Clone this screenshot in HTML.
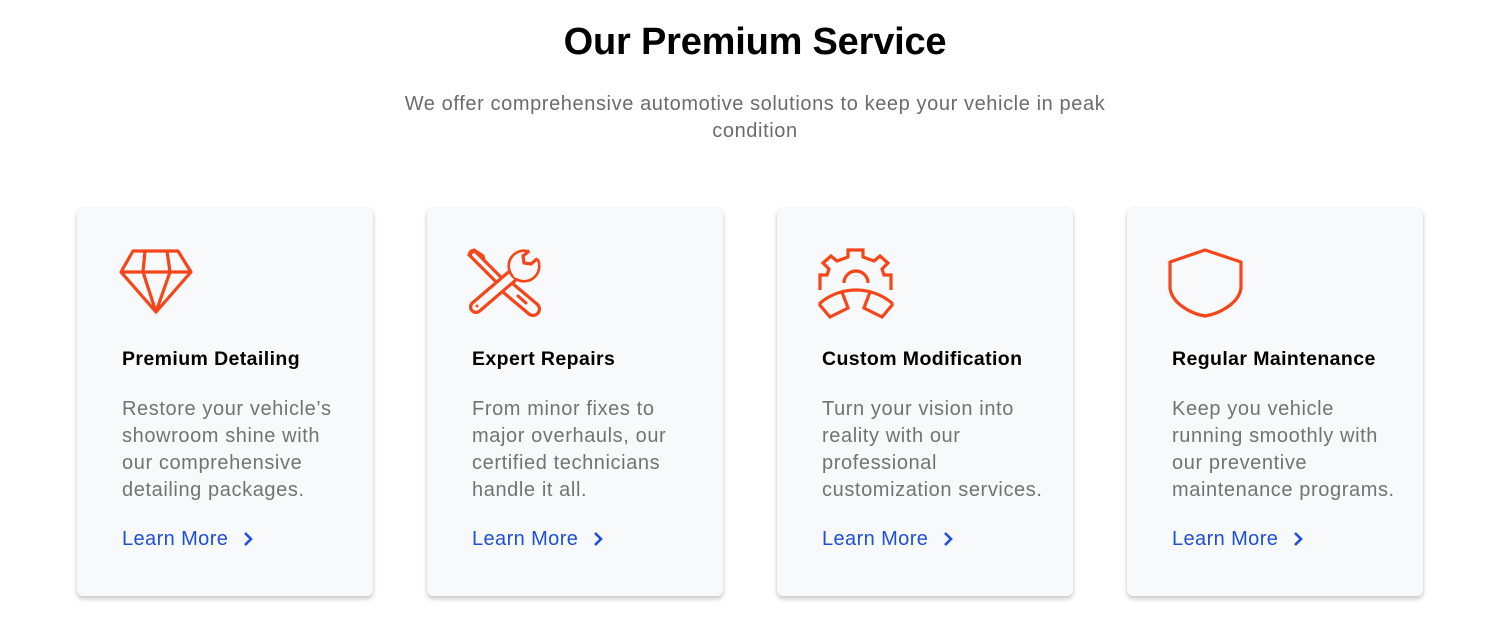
<!DOCTYPE html>
<html><head><meta charset="utf-8"><style>
*{margin:0;padding:0;box-sizing:border-box}
body{width:1510px;height:642px;background:#fff;font-family:"Liberation Sans",sans-serif;position:relative;overflow:hidden}
h1{position:absolute;top:21px;left:0;width:1510px;text-align:center;font-size:38px;font-weight:bold;color:#000;letter-spacing:-0.2px}
.sub{position:absolute;top:91px;left:0;width:1510px;text-align:center;font-size:20px;line-height:27px;color:#6b6b6b;letter-spacing:0.6px}
.card{position:absolute;top:208px;width:296px;height:388px;background:#f8f9fb;border-radius:6px;box-shadow:0 3px 5px rgba(0,0,0,.2),0 0 2px rgba(0,0,0,.08)}
.card svg.ic{position:absolute;left:41px;top:40px}
.card h3{position:absolute;left:45px;top:140px;font-size:19.5px;font-weight:bold;color:#000;white-space:nowrap;letter-spacing:0.4px}
.card p{position:absolute;left:45px;top:188px;font-size:20px;line-height:27px;color:#737373;white-space:nowrap;letter-spacing:0.6px}
.card a{position:absolute;left:45px;top:320px;font-size:20px;color:#1e4fd8;text-decoration:none;white-space:nowrap;letter-spacing:0.4px}
.card a svg{position:absolute;left:120px;top:3px}
</style></head><body>
<h1>Our Premium Service</h1>
<div class="sub">We offer comprehensive automotive solutions to keep your vehicle in peak<br>condition</div>

<div class="card" style="left:77px">
<svg class="ic" width="76" height="72" viewBox="0 0 76 72" fill="none" stroke="#f4461a" stroke-width="3.2" stroke-linejoin="round"><g transform="translate(3,2)"><path d="M12 1H57L70 22L35 62L0 22Z"/><path d="M0 22H70M24 1L22 22L35 62M46 1L49 22L35 62"/></g></svg>
<h3>Premium Detailing</h3>
<p>Restore your vehicle’s<br>showroom shine with<br>our comprehensive<br>detailing packages.</p>
<a>Learn More<svg width="12" height="16" viewBox="0 0 12 16"><path d="M3 2L9 8L3 14" fill="none" stroke="#1e4fd8" stroke-width="2.6"/></svg></a>
</div>

<div class="card" style="left:427px">
<svg class="ic" style="left:40px" width="80" height="75" viewBox="0 0 80 75" fill="none" stroke-linecap="round" stroke-linejoin="round">
<path d="M2 7L7 2L16 8L17 12" stroke="#f4461a" stroke-width="3.2"/>
<line x1="6" y1="6" x2="32" y2="32" stroke="#f4461a" stroke-width="10"/>
<line x1="7" y1="7" x2="32" y2="32" stroke="#f8f9fb" stroke-width="3.6"/>
<line x1="41" y1="40" x2="66" y2="61" stroke="#f4461a" stroke-width="16"/>
<line x1="41" y1="40" x2="66" y2="61" stroke="#f8f9fb" stroke-width="9.6"/>
<line x1="51" y1="48" x2="59" y2="55" stroke="#f4461a" stroke-width="3"/>
<line x1="9" y1="59" x2="44" y2="29" stroke="#f4461a" stroke-width="14"/>
<line x1="9" y1="59" x2="44" y2="29" stroke="#f8f9fb" stroke-width="7.6"/>
<circle cx="57" cy="18" r="15" fill="#f8f9fb" stroke="#f4461a" stroke-width="3.2"/>
<circle cx="57" cy="18" r="14" fill="#f8f9fb"/>
<path d="M50 26L54 22" stroke="#f8f9fb" stroke-width="8"/>
<path d="M62 3L56 8L57 15L64 16L71 10" stroke="#f4461a" stroke-width="3.2" fill="#f8f9fb"/>
<path d="M64 2L72 9" stroke="#f8f9fb" stroke-width="4"/>
<circle cx="10" cy="58" r="1.5" fill="#f4461a"/>
</svg>
<h3>Expert Repairs</h3>
<p>From minor fixes to<br>major overhauls, our<br>certified technicians<br>handle it all.</p>
<a>Learn More<svg width="12" height="16" viewBox="0 0 12 16"><path d="M3 2L9 8L3 14" fill="none" stroke="#1e4fd8" stroke-width="2.6"/></svg></a>
</div>

<div class="card" style="left:777px">
<svg class="ic" width="80" height="75" viewBox="0 0 80 75" fill="none" stroke="#f4461a" stroke-width="3.2" stroke-linejoin="miter">
<path d="M2 42V27H9L11 21L5 15L13 8L19 13L30 9V2H45V9L56 13L62 8L70 15L64 21L66 27H73V42"/>
<path d="M26 35A12 12 0 0 1 50 35"/>
<path d="M1 56A56 56 0 0 1 75 56"/>
<path d="M1 56L12 69L30 60L24 44"/>
<path d="M75 56L64 69L46 60L52 44"/>
</svg>
<h3>Custom Modification</h3>
<p>Turn your vision into<br>reality with our<br>professional<br>customization services.</p>
<a>Learn More<svg width="12" height="16" viewBox="0 0 12 16"><path d="M3 2L9 8L3 14" fill="none" stroke="#1e4fd8" stroke-width="2.6"/></svg></a>
</div>

<div class="card" style="left:1127px">
<svg class="ic" width="80" height="75" viewBox="0 0 80 75" fill="none" stroke="#f4461a" stroke-width="3.2" stroke-linejoin="round"><path d="M37 2L2 14V40C4 56 24 66 37 68C50 66 71 56 73 40V14Z"/></svg>
<h3>Regular Maintenance</h3>
<p>Keep you vehicle<br>running smoothly with<br>our preventive<br>maintenance programs.</p>
<a>Learn More<svg width="12" height="16" viewBox="0 0 12 16"><path d="M3 2L9 8L3 14" fill="none" stroke="#1e4fd8" stroke-width="2.6"/></svg></a>
</div>
</body></html>
